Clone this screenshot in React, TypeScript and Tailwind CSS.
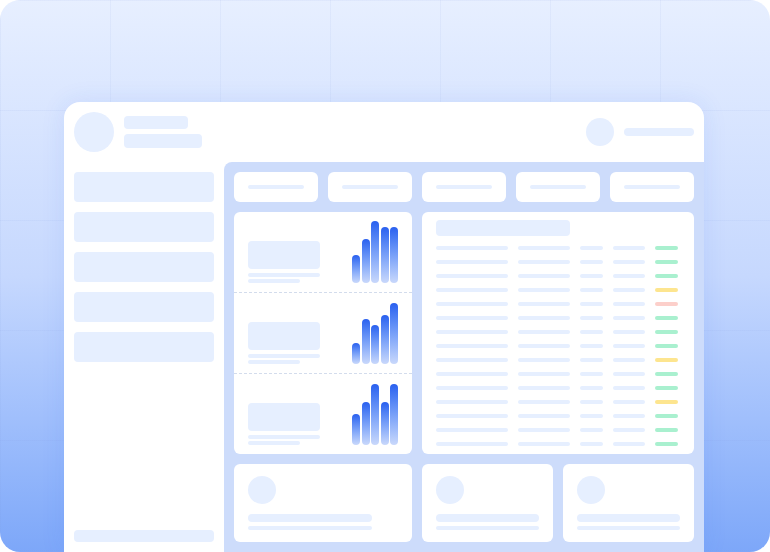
import React from 'react';

const BAR_SETS: number[][] = [
  [28, 44, 62, 56, 56],
  [21, 45, 39, 49, 61],
  [31, 43, 61, 43, 61],
];

// status pill colour per table row
const STATUS = ['g', 'g', 'g', 'y', 'r', 'g', 'g', 'g', 'y', 'g', 'g', 'y', 'g', 'g', 'g'];

const STATUS_CLASS: Record<string, string> = {
  g: 'bg-[#a9f0cf]',
  y: 'bg-[#fde58f]',
  r: 'bg-[#fccfca]',
};

const Bars: React.FC<{ heights: number[] }> = ({ heights }) => (
  <div className="flex items-end gap-[1.5px]">
    {heights.map((h, i) => (
      <div
        key={i}
        className="w-[8px] rounded-full bg-gradient-to-b from-[#2a60ef] to-[#c9d8fb]"
        style={{ height: h }}
      />
    ))}
  </div>
);

const ChartRow: React.FC<{ heights: number[]; first?: boolean }> = ({ heights, first }) => (
  <div
    className={`flex-1 flex items-end justify-between px-[14px] pb-[9px] ${
      first ? '' : 'border-t border-dashed border-[#d3dcec]'
    }`}
  >
    <div className="flex flex-col w-[72px]">
      <div className="h-[28px] rounded-[4px] bg-[#e6efff]" />
      <div className="mt-[4px] h-[4px] rounded-full bg-[#e6efff]" />
      <div className="mt-[2px] h-[4px] w-[52px] rounded-full bg-[#e6efff]" />
    </div>
    <Bars heights={heights} />
  </div>
);

const BottomCard: React.FC<{ narrow?: boolean }> = ({ narrow }) => (
  <div className="bg-white rounded-[6px] px-[14px] pt-[12px] pb-[12px] flex flex-col">
    <div className="w-[28px] h-[28px] rounded-full bg-[#e6efff]" />
    <div className={`mt-[10px] flex flex-col gap-[4px] ${narrow ? 'w-[124px]' : 'w-full'}`}>
      <div className="h-[8px] rounded-full bg-[#e6efff]" />
      <div className="h-[4px] rounded-full bg-[#e6efff]" />
    </div>
  </div>
);

export default function App() {
  return (
    <div className="w-[770px] h-[552px] bg-white">
      <div className="relative w-[770px] h-[552px] rounded-[20px] overflow-hidden bg-gradient-to-b from-[#e7efff] via-[#c6d8fe] to-[#7da7f9]">
        {/* faint grid behind the window */}
        <div className="absolute inset-0 bg-[linear-gradient(to_right,rgba(120,150,220,0.08)_1px,transparent_1px),linear-gradient(to_bottom,rgba(120,150,220,0.08)_1px,transparent_1px)] bg-[size:110px_110px]" />

        <div className="relative pt-[102px] pl-[64px]">
          <div className="w-[640px] h-[450px] bg-white rounded-t-[16px] overflow-hidden flex flex-col shadow-[0_0_24px_rgba(37,99,235,0.10)]">
            {/* header */}
            <div className="h-[60px] shrink-0 flex items-start justify-between px-[10px] pt-[10px]">
              <div className="flex gap-[10px]">
                <div className="w-[40px] h-[40px] rounded-full bg-[#e6efff]" />
                <div className="flex flex-col gap-[5px] pt-[4px]">
                  <div className="w-[64px] h-[13px] rounded-[4px] bg-[#e6efff]" />
                  <div className="w-[78px] h-[14px] rounded-[4px] bg-[#e6efff]" />
                </div>
              </div>
              <div className="flex items-center gap-[10px] pt-[6px]">
                <div className="w-[28px] h-[28px] rounded-full bg-[#e6efff]" />
                <div className="w-[70px] h-[8px] rounded-full bg-[#e6efff]" />
              </div>
            </div>

            <div className="flex-1 flex min-h-0">
              {/* sidebar */}
              <div className="w-[160px] shrink-0 flex flex-col justify-between px-[10px] pt-[10px] pb-[10px]">
                <div className="flex flex-col gap-[10px]">
                  {[0, 1, 2, 3, 4].map((i) => (
                    <div key={i} className="h-[30px] rounded-[4px] bg-[#e6efff]" />
                  ))}
                </div>
                <div className="h-[12px] rounded-[4px] bg-[#e6efff]" />
              </div>

              {/* main */}
              <div className="flex-1 bg-[#cddcfb] rounded-tl-[8px] p-[10px] flex flex-col gap-[10px]">
                <div className="grid grid-cols-5 gap-[10px]">
                  {[0, 1, 2, 3, 4].map((i) => (
                    <div key={i} className="h-[30px] bg-white rounded-[6px] flex items-center justify-center">
                      <div className="w-[56px] h-[4px] rounded-full bg-[#e6efff]" />
                    </div>
                  ))}
                </div>

                <div className="grid grid-cols-[178px_1fr] gap-[10px] h-[242px]">
                  <div className="bg-white rounded-[6px] flex flex-col">
                    {BAR_SETS.map((h, i) => (
                      <ChartRow key={i} heights={h} first={i === 0} />
                    ))}
                  </div>

                  <div className="bg-white rounded-[6px] px-[14px] pt-[8px]">
                    <div className="w-[134px] h-[16px] rounded-[4px] bg-[#e6efff]" />
                    <div className="mt-[10px] flex flex-col gap-[10px]">
                      {STATUS.map((s, i) => (
                        <div key={i} className="flex gap-[10px] h-[4px]">
                          <div className="w-[72px] rounded-full bg-[#e6efff]" />
                          <div className="w-[52px] rounded-full bg-[#e6efff]" />
                          <div className="w-[23px] rounded-full bg-[#e6efff]" />
                          <div className="w-[32px] rounded-full bg-[#e6efff]" />
                          <div className={`w-[23px] rounded-full ${STATUS_CLASS[s]}`} />
                        </div>
                      ))}
                    </div>
                  </div>
                </div>

                <div className="grid grid-cols-[178px_1fr_1fr] gap-[10px] h-[78px]">
                  <BottomCard narrow />
                  <BottomCard />
                  <BottomCard />
                </div>
              </div>
            </div>
          </div>
        </div>
      </div>
    </div>
  );
}
